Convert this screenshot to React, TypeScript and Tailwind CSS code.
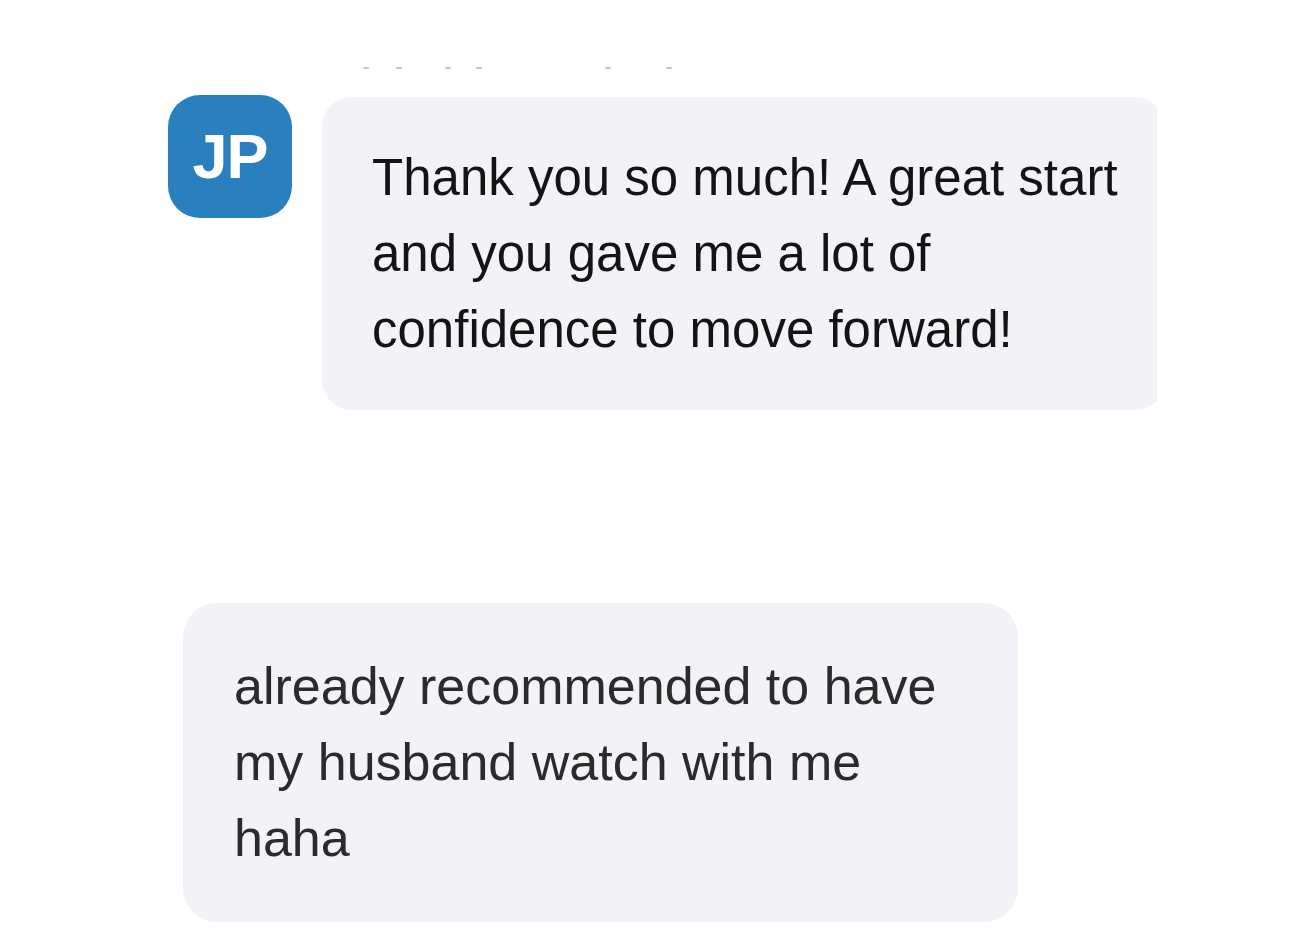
export default function App() {
  return (
    <div className="w-[1302px] h-[942px] bg-white overflow-hidden font-['Liberation_Sans',Arial,sans-serif]">
      {/* faint dashes left over from the line above */}
      <div className="flex pt-[67px] pl-[363px]">
        <span className="w-[6px] h-[2px] rounded-full bg-[#c4c4c8]" />
        <span className="ml-[27px] w-[6px] h-[2px] rounded-full bg-[#c4c4c8]" />
        <span className="ml-[43px] w-[6px] h-[2px] rounded-full bg-[#c4c4c8]" />
        <span className="ml-[25px] w-[6px] h-[2px] rounded-full bg-[#c4c4c8]" />
        <span className="ml-[123px] w-[6px] h-[2px] rounded-full bg-[#c4c4c8]" />
        <span className="ml-[55px] w-[6px] h-[2px] rounded-full bg-[#c4c4c8]" />
      </div>

      {/* incoming message with avatar */}
      <div className="mt-[26px] ml-[168px] w-[989px] flex items-start gap-[30px] overflow-hidden">
        <div className="shrink-0 w-[124px] h-[123px] rounded-[32px] bg-[#2a7fbe] flex items-center justify-center">
          <span className="text-white font-bold text-[63px] leading-none tracking-[-1px]">JP</span>
        </div>
        <div className="shrink-0 mt-[2px] w-[843px] rounded-[30px] bg-[#f2f2f7] pl-[50px] pr-[20px] pt-[43px] pb-[42px] text-[51px] leading-[76px] text-[#141414]">
          Thank you so much! A great start and you gave me a lot of confidence to move forward!
        </div>
      </div>

      {/* follow-up message */}
      <div className="mt-[193px] ml-[183px] w-[835px] rounded-[34px] bg-[#f2f2f7] pl-[51px] pr-[60px] pt-[45px] pb-[46px] text-[52px] leading-[76px] text-[#2b2b2b]">
        already recommended to have my husband watch with me haha
      </div>
    </div>
  );
}
